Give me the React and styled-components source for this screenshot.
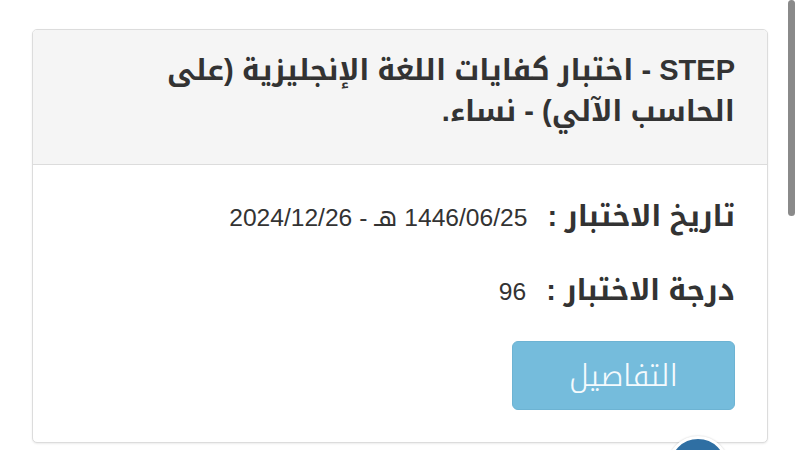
import styled, { createGlobalStyle } from "styled-components";

const GlobalStyle = createGlobalStyle`
  html, body {
    margin: 0;
    padding: 0;
    background: #fff;
    overflow: hidden;
  }
  body {
    font-family: "Liberation Sans", "Noto Kufi Arabic", "Noto Sans Arabic", "DejaVu Sans", sans-serif;
    color: #333;
  }
`;

const Page = styled.div`
  direction: rtl;
  padding: 29px 32px 0;
  height: 450px;
  box-sizing: border-box;
`;

const Card = styled.section`
  border: 1px solid #dcdcdc;
  border-radius: 5px;
  background: #fff;
  box-shadow: 0 1px 2px rgba(0, 0, 0, 0.08);
  overflow: hidden;
`;

const CardHeader = styled.header`
  background: #f5f5f5;
  border-bottom: 1px solid #dcdcdc;
  padding: 20px 32px 32px;
`;

const Title = styled.h3`
  margin: 0;
  font-size: 29px;
  font-weight: bold;
  line-height: 41px;
  color: #333;
  max-width: 600px;
`;

const CardBody = styled.div`
  padding: 24px 32px 32px;
  display: flex;
  flex-direction: column;
  align-items: flex-start;
`;

const InfoRow = styled.div`
  display: flex;
  align-items: baseline;
  gap: 20px;
  height: 40px;
  margin-bottom: ${(p) => p.$gap || 34}px;
`;

const Label = styled.span`
  font-size: 29px;
  font-weight: bold;
  color: #333;
`;

const Value = styled.span`
  font-size: 24.6px;
  color: #333;
`;

const DetailsButton = styled.button`
  width: 223px;
  height: 69px;
  border: 1px solid #6db3d3;
  border-radius: 6px;
  background: #75bcdc;
  color: #f4fafd;
  font-family: "Noto Kufi Arabic", "Noto Sans Arabic", "DejaVu Sans", sans-serif;
  font-size: 30px;
  font-weight: 300;
  cursor: pointer;
`;

const ScrollThumb = styled.div`
  position: fixed;
  top: 0;
  right: 5px;
  width: 7px;
  height: 216px;
  border-radius: 4px;
  background: #8a8a8a;
`;

const FloatingBadge = styled.div`
  position: fixed;
  left: 667px;
  top: 436px;
  width: 56px;
  height: 56px;
  border-radius: 50%;
  background: #2f6fa3;
  border: 3px solid #fff;
  box-shadow: 0 0 2px rgba(0, 0, 0, 0.2);
`;

export default function App() {
  return (
    <>
      <GlobalStyle />
      <Page>
        <Card>
          <CardHeader>
            <Title>STEP - اختبار كفايات اللغة الإنجليزية (على الحاسب الآلي) - نساء.</Title>
          </CardHeader>
          <CardBody>
            <InfoRow>
              <Label>تاريخ الاختبار :</Label>
              <Value>1446/06/25 هـ - 2024/12/26</Value>
            </InfoRow>
            <InfoRow $gap={38}>
              <Label>درجة الاختبار :</Label>
              <Value>96</Value>
            </InfoRow>
            <DetailsButton>التفاصيل</DetailsButton>
          </CardBody>
        </Card>
      </Page>
      <ScrollThumb />
      <FloatingBadge />
    </>
  );
}
